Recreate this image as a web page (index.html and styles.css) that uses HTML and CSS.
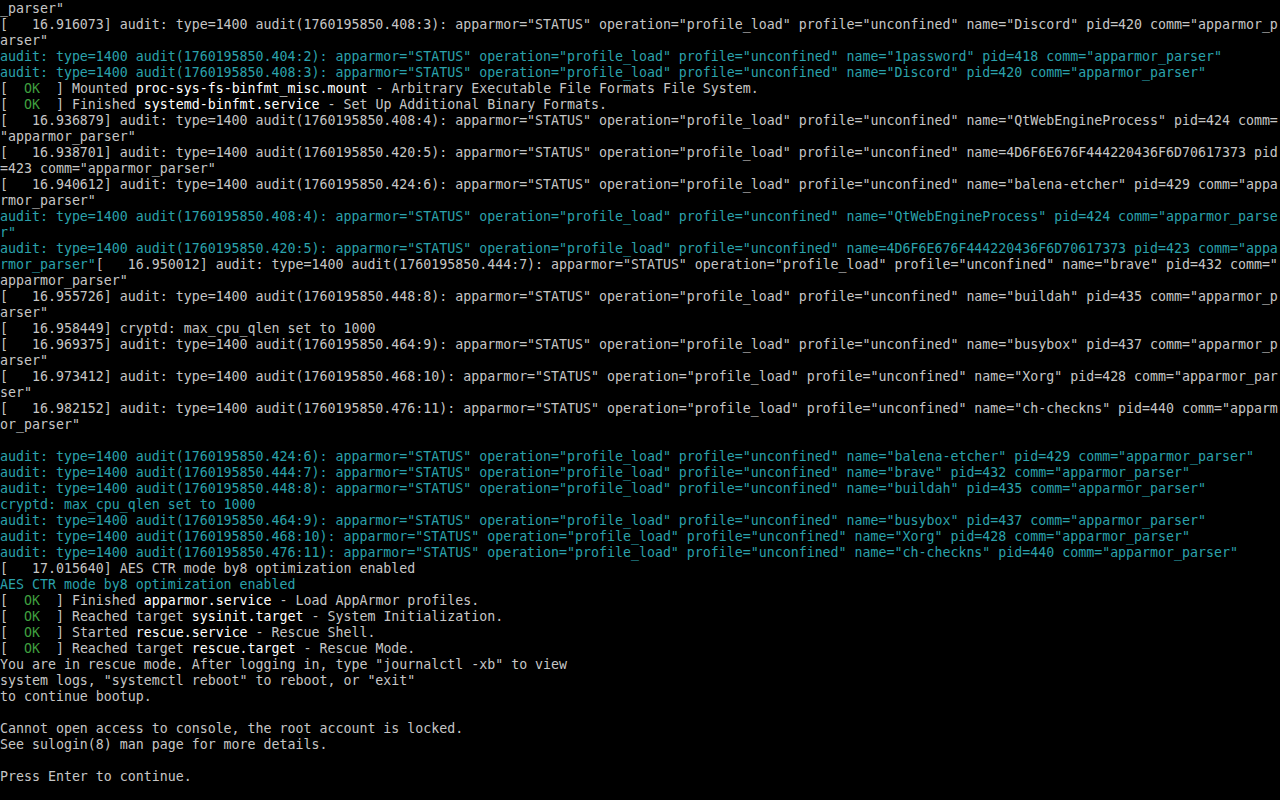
FILE: index.html
```html
<!DOCTYPE html>
<html lang="en">
<head>
<meta charset="utf-8">
<title>Rescue console</title>
<link rel="stylesheet" href="styles.css">
</head>
<body>
<pre class="console">_parser"
[   16.916073] audit: type=1400 audit(1760195850.408:3): apparmor="STATUS" operation="profile_load" profile="unconfined" name="Discord" pid=420 comm="apparmor_p
arser"
<span class="c">audit: type=1400 audit(1760195850.404:2): apparmor="STATUS" operation="profile_load" profile="unconfined" name="1password" pid=418 comm="apparmor_parser"</span>
<span class="c">audit: type=1400 audit(1760195850.408:3): apparmor="STATUS" operation="profile_load" profile="unconfined" name="Discord" pid=420 comm="apparmor_parser"</span>
[  <span class="g">OK</span>  ] Mounted <span class="w">proc-sys-fs-binfmt_misc.mount</span> - Arbitrary Executable File Formats File System.
[  <span class="g">OK</span>  ] Finished <span class="w">systemd-binfmt.service</span> - Set Up Additional Binary Formats.
[   16.936879] audit: type=1400 audit(1760195850.408:4): apparmor="STATUS" operation="profile_load" profile="unconfined" name="QtWebEngineProcess" pid=424 comm=
"apparmor_parser"
[   16.938701] audit: type=1400 audit(1760195850.420:5): apparmor="STATUS" operation="profile_load" profile="unconfined" name=4D6F6E676F444220436F6D70617373 pid
=423 comm="apparmor_parser"
[   16.940612] audit: type=1400 audit(1760195850.424:6): apparmor="STATUS" operation="profile_load" profile="unconfined" name="balena-etcher" pid=429 comm="appa
rmor_parser"
<span class="c">audit: type=1400 audit(1760195850.408:4): apparmor="STATUS" operation="profile_load" profile="unconfined" name="QtWebEngineProcess" pid=424 comm="apparmor_parse</span>
<span class="c">r"</span>
<span class="c">audit: type=1400 audit(1760195850.420:5): apparmor="STATUS" operation="profile_load" profile="unconfined" name=4D6F6E676F444220436F6D70617373 pid=423 comm="appa</span>
<span class="c">rmor_parser"</span>[   16.950012] audit: type=1400 audit(1760195850.444:7): apparmor="STATUS" operation="profile_load" profile="unconfined" name="brave" pid=432 comm="
apparmor_parser"
[   16.955726] audit: type=1400 audit(1760195850.448:8): apparmor="STATUS" operation="profile_load" profile="unconfined" name="buildah" pid=435 comm="apparmor_p
arser"
[   16.958449] cryptd: max_cpu_qlen set to 1000
[   16.969375] audit: type=1400 audit(1760195850.464:9): apparmor="STATUS" operation="profile_load" profile="unconfined" name="busybox" pid=437 comm="apparmor_p
arser"
[   16.973412] audit: type=1400 audit(1760195850.468:10): apparmor="STATUS" operation="profile_load" profile="unconfined" name="Xorg" pid=428 comm="apparmor_par
ser"
[   16.982152] audit: type=1400 audit(1760195850.476:11): apparmor="STATUS" operation="profile_load" profile="unconfined" name="ch-checkns" pid=440 comm="apparm
or_parser"

<span class="c">audit: type=1400 audit(1760195850.424:6): apparmor="STATUS" operation="profile_load" profile="unconfined" name="balena-etcher" pid=429 comm="apparmor_parser"</span>
<span class="c">audit: type=1400 audit(1760195850.444:7): apparmor="STATUS" operation="profile_load" profile="unconfined" name="brave" pid=432 comm="apparmor_parser"</span>
<span class="c">audit: type=1400 audit(1760195850.448:8): apparmor="STATUS" operation="profile_load" profile="unconfined" name="buildah" pid=435 comm="apparmor_parser"</span>
<span class="c">cryptd: max_cpu_qlen set to 1000</span>
<span class="c">audit: type=1400 audit(1760195850.464:9): apparmor="STATUS" operation="profile_load" profile="unconfined" name="busybox" pid=437 comm="apparmor_parser"</span>
<span class="c">audit: type=1400 audit(1760195850.468:10): apparmor="STATUS" operation="profile_load" profile="unconfined" name="Xorg" pid=428 comm="apparmor_parser"</span>
<span class="c">audit: type=1400 audit(1760195850.476:11): apparmor="STATUS" operation="profile_load" profile="unconfined" name="ch-checkns" pid=440 comm="apparmor_parser"</span>
[   17.015640] AES CTR mode by8 optimization enabled
<span class="c">AES CTR mode by8 optimization enabled</span>
[  <span class="g">OK</span>  ] Finished <span class="w">apparmor.service</span> - Load AppArmor profiles.
[  <span class="g">OK</span>  ] Reached target <span class="w">sysinit.target</span> - System Initialization.
[  <span class="g">OK</span>  ] Started <span class="w">rescue.service</span> - Rescue Shell.
[  <span class="g">OK</span>  ] Reached target <span class="w">rescue.target</span> - Rescue Mode.
You are in rescue mode. After logging in, type "journalctl -xb" to view
system logs, "systemctl reboot" to reboot, or "exit"
to continue bootup.

Cannot open access to console, the root account is locked.
See sulogin(8) man page for more details.

Press Enter to continue.</pre>
</body>
</html>
```

FILE: styles.css
```css
html, body {
  margin: 0;
  padding: 0;
  background: #000;
  width: 1280px;
  height: 800px;
  overflow: hidden;
}

.console {
  margin: 0;
  padding: 1px 0 0 0;
  font-family: "DejaVu Sans Mono", "Liberation Mono", monospace;
  font-size: 13.288px;
  line-height: 16px;
  color: #c6c6c6;
  white-space: pre;
  font-variant-ligatures: none;
}

.c {
  color: #2ba2ac;
}

.g {
  color: #3f9f3f;
}

.w {
  color: #ffffff;
}
```
